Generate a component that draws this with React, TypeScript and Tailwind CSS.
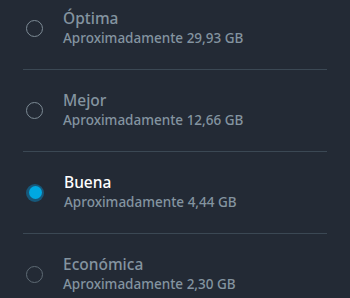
import React from "react";

type Item = { title: string; sub: string; selected?: boolean; dim?: boolean };

const items: Item[] = [
  { title: "Óptima", sub: "Aproximadamente 29,93 GB" },
  { title: "Mejor", sub: "Aproximadamente 12,66 GB" },
  { title: "Buena", sub: "Aproximadamente 4,44 GB", selected: true },
  { title: "Económica", sub: "Aproximadamente 2,30 GB", dim: true },
];

function Radio({ selected, dim }: { selected?: boolean; dim?: boolean }) {
  if (selected) {
    return (
      <div className="w-[18px] h-[18px] rounded-full bg-[#17587a] flex items-center justify-center shrink-0">
        <div className="w-[13px] h-[13px] rounded-full bg-[#00a8e1]" />
      </div>
    );
  }
  return (
    <div
      className={
        dim
          ? "w-[17px] h-[17px] rounded-full border-[1.5px] border-[#5e6a74] shrink-0"
          : "w-[17px] h-[17px] rounded-full border-[1.5px] border-[#7d8b95] shrink-0"
      }
    />
  );
}

export default function App() {
  return (
    <div
      className="w-[350px] h-[298px] overflow-hidden bg-[#232a35]"
      style={{ fontFamily: '"Noto Sans", sans-serif' }}
    >
      <div className="-mt-[12px] flex flex-col">
        {items.map((it, i) => (
          <div key={i} className="flex flex-col">
            <div className="h-[81px] flex items-center pl-[26px]">
              <Radio selected={it.selected} dim={it.dim} />
              <div className="ml-[20px] flex flex-col">
                <div
                  className={
                    it.selected
                      ? "text-[15.5px] leading-[19px] font-medium text-white"
                      : "text-[15.5px] leading-[19px] font-medium text-[#8494a0]"
                  }
                >
                  {it.title}
                </div>
                <div className="text-[13.5px] leading-[19px] mt-[1px] font-medium text-[#8494a0]">
                  {it.sub}
                </div>
              </div>
            </div>
            {i < items.length - 1 && <div className="mx-[23px] h-px bg-[#3b4854]" />}
          </div>
        ))}
      </div>
    </div>
  );
}
